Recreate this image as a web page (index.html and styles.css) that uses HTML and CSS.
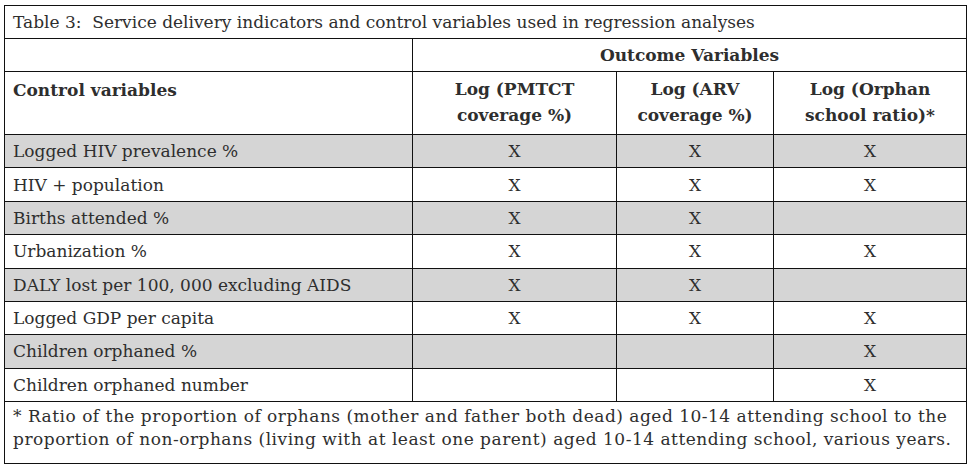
FILE: index.html
```html
<!DOCTYPE html>
<html>
<head>
<meta charset="utf-8">
<link rel="stylesheet" href="styles.css">
</head>
<body>
<table class="tbl">
  <colgroup>
    <col class="c1"><col class="c2"><col class="c3"><col class="c4">
  </colgroup>
  <tr class="title-row"><td colspan="4" class="title">Table 3:&nbsp; Service delivery indicators and control variables used in regression analyses</td></tr>
  <tr class="outcome-row"><td></td><th colspan="3" class="outcome">Outcome Variables</th></tr>
  <tr class="head-row">
    <th class="label-head">Control variables</th>
    <th class="col-head"><span class="hl">Log (PMTCT</span><span class="hl">coverage %)</span></th>
    <th class="col-head"><span class="hl">Log (ARV</span><span class="hl">coverage %)</span></th>
    <th class="col-head"><span class="hl">Log (Orphan</span><span class="hl">school ratio)*</span></th>
  </tr>
  <tr class="row shade"><td class="label">Logged HIV prevalence %</td><td class="x">X</td><td class="x">X</td><td class="x">X</td></tr>
  <tr class="row"><td class="label">HIV + population</td><td class="x">X</td><td class="x">X</td><td class="x">X</td></tr>
  <tr class="row shade"><td class="label">Births attended %</td><td class="x">X</td><td class="x">X</td><td class="x"></td></tr>
  <tr class="row"><td class="label">Urbanization %</td><td class="x">X</td><td class="x">X</td><td class="x">X</td></tr>
  <tr class="row shade"><td class="label">DALY lost per 100, 000 excluding AIDS</td><td class="x">X</td><td class="x">X</td><td class="x"></td></tr>
  <tr class="row"><td class="label">Logged GDP per capita</td><td class="x">X</td><td class="x">X</td><td class="x">X</td></tr>
  <tr class="row shade"><td class="label">Children orphaned %</td><td class="x"></td><td class="x"></td><td class="x">X</td></tr>
  <tr class="row"><td class="label">Children orphaned number</td><td class="x"></td><td class="x"></td><td class="x">X</td></tr>
  <tr class="note-row"><td colspan="4" class="note">* Ratio of the proportion of orphans (mother and father both dead) aged 10-14 attending school to the<br>proportion of non-orphans (living with at least one parent) aged 10-14 attending school, various years.</td></tr>
</table>
</body>
</html>
```
FILE: styles.css
```css
html, body {
  margin: 0;
  padding: 0;
  background: #ffffff;
}
body {
  padding: 5px 0 0 4px;
}
.tbl {
  font-family: "DejaVu Serif", "Noto Serif", serif;
  color: #2e2e2e;
  border-collapse: collapse;
  table-layout: fixed;
  width: 962px;
  font-size: 17px;
  line-height: 20px;
}
.tbl td, .tbl th {
  font-family: "DejaVu Serif", "Noto Serif", serif;
  border: 1.5px solid #111;
  padding: 0;
}
.c1 { width: 408px; }
.c2 { width: 204px; }
.c3 { width: 157px; }
.c4 { width: 193px; }
.title {
  height: 32px;
  padding: 0 8px !important;
  vertical-align: middle;
}
.outcome-row td, .outcome-row th { height: 32px; }
.outcome {
  font-weight: bold;
  text-align: center;
  vertical-align: middle;
}
.head-row th { height: 54px; }
.label-head {
  text-align: left;
  vertical-align: top;
  padding: 8px 0 0 8px !important;
}
.col-head {
  text-align: center;
  vertical-align: top;
  font-weight: bold;
  padding-top: 4px !important;
}
.hl {
  display: block;
  height: 26px;
  line-height: 27px;
  overflow: hidden;
}
.row td { height: 32.375px; vertical-align: middle; }
.shade td { background: #d5d5d5; }
.label { padding-left: 8px !important; }
.x { text-align: center; }
.note-row td { height: 58px; }
.note {
  padding: 3px 6px 0 8px !important;
  line-height: 23px;
  vertical-align: top;
  white-space: nowrap;
  letter-spacing: 0.5px;
}
```
